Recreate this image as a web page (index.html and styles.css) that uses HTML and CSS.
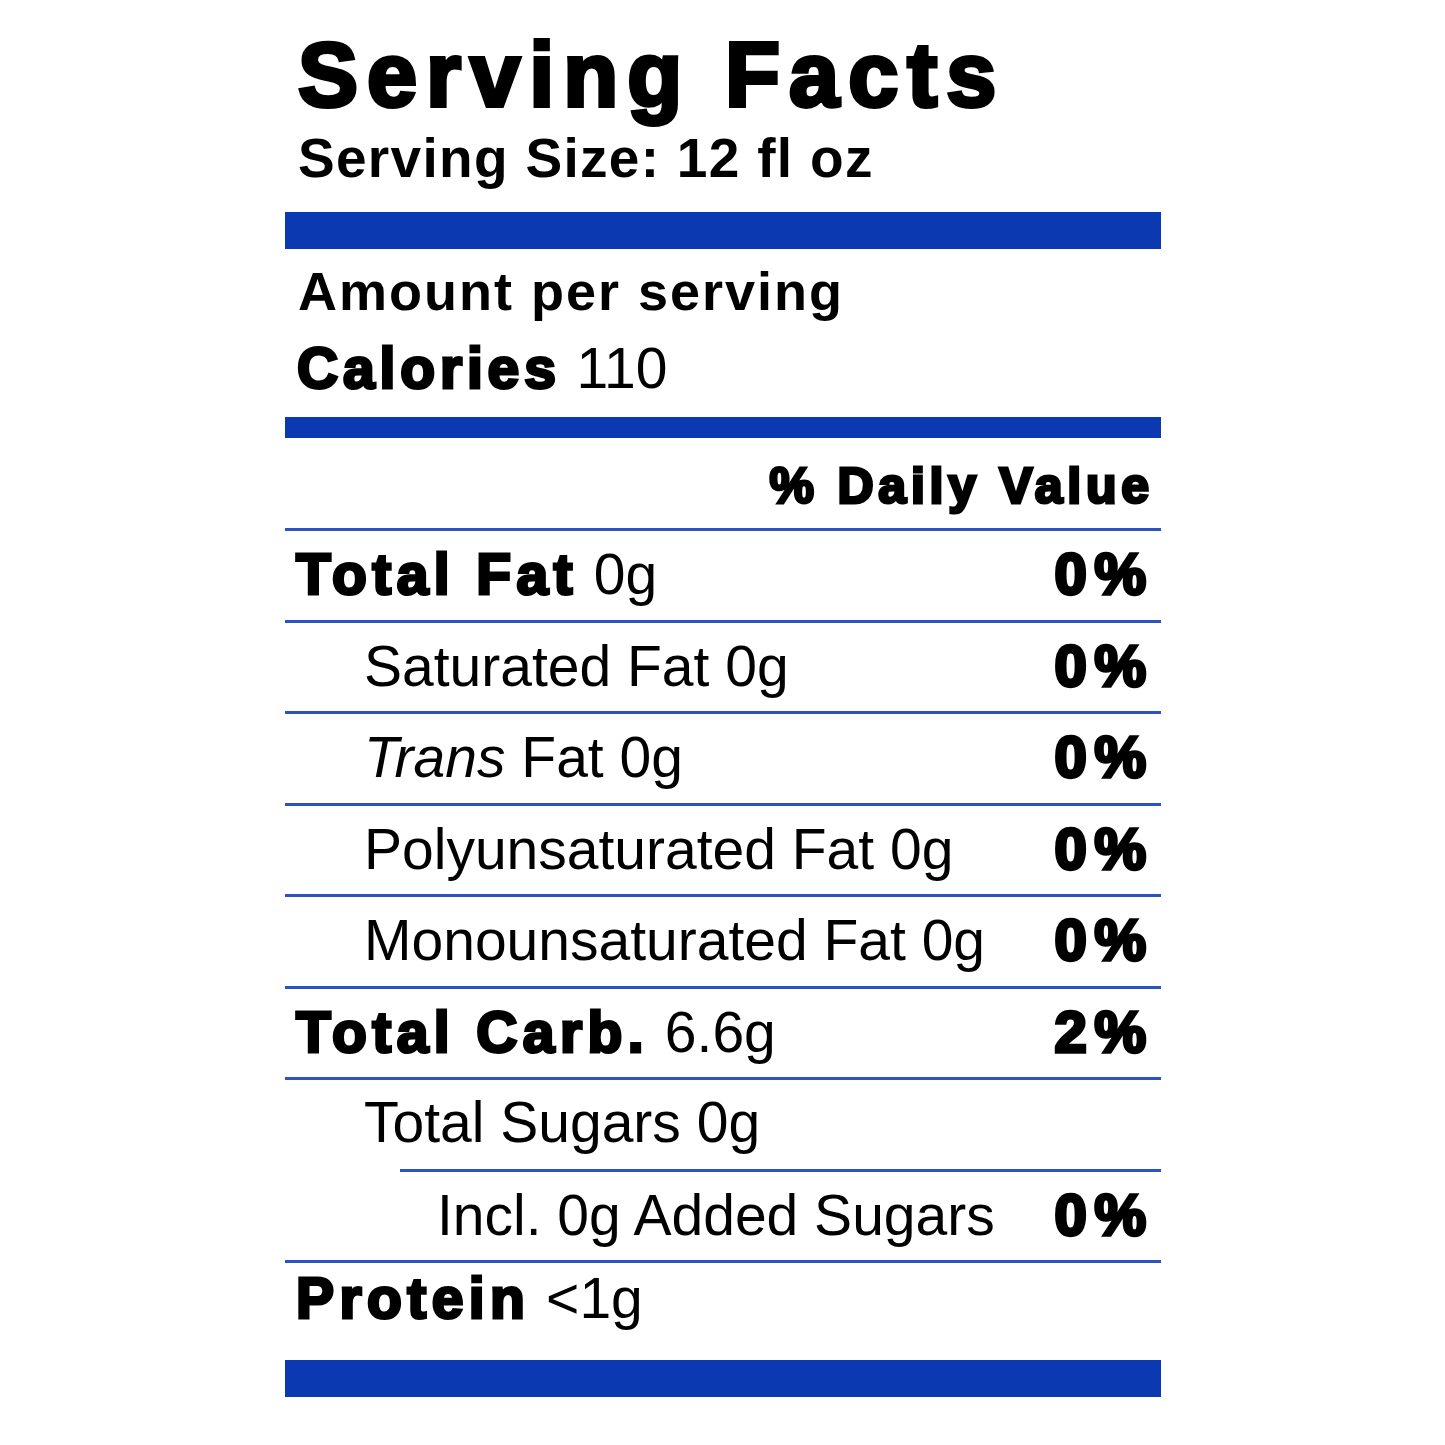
FILE: index.html
```html
<!DOCTYPE html>
<html lang="en">
<head>
<meta charset="utf-8">
<title>Serving Facts</title>
<link rel="stylesheet" href="styles.css">
</head>
<body>
<div class="label">
  <h1 class="title">Serving Facts</h1>
  <div class="size">Serving Size: 12 fl oz</div>
  <div class="bar bar-thick"></div>
  <div class="amount">Amount per serving</div>
  <div class="calories"><b class="heavy">Calories</b> 110</div>
  <div class="bar bar-mid"></div>
  <div class="dv-head"><span class="heavy">% Daily Value</span></div>

  <div class="row"><span class="name"><b class="heavy">Total Fat</b> 0g</span><span class="pct">0%</span></div>
  <div class="row sub"><span class="name">Saturated Fat 0g</span><span class="pct">0%</span></div>
  <div class="row sub"><span class="name"><i>Trans</i> Fat 0g</span><span class="pct">0%</span></div>
  <div class="row sub"><span class="name">Polyunsaturated Fat 0g</span><span class="pct">0%</span></div>
  <div class="row sub"><span class="name">Monounsaturated Fat 0g</span><span class="pct">0%</span></div>
  <div class="row"><span class="name"><b class="heavy">Total Carb.</b> 6.6g</span><span class="pct">2%</span></div>
  <div class="row sub"><span class="name">Total Sugars 0g</span></div>
  <div class="row subsub"><span class="name">Incl. 0g Added Sugars</span><span class="pct">0%</span></div>
  <div class="row protein"><span class="name"><b class="heavy">Protein</b> &lt;1g</span></div>
  <div class="bar bar-thick"></div>
</div>
</body>
</html>
```

FILE: styles.css
```css
html, body {
  margin: 0;
  padding: 0;
  background: #ffffff;
}

body {
  font-family: "Liberation Sans", Arial, sans-serif;
  color: #000;
}

.label {
  width: 876px;
  margin-left: 285px;
  padding-top: 25px;
  padding-bottom: 40px;
}

.title {
  margin: 0;
  padding-left: 13px;
  font-size: 90px;
  line-height: 100px;
  height: 100px;
  font-weight: 700;
  letter-spacing: 0.1em;
  -webkit-text-stroke: 4px #000;
  white-space: nowrap;
}

.size {
  margin-top: 3px;
  padding-left: 13px;
  font-size: 55px;
  line-height: 60px;
  font-weight: 700;
  letter-spacing: 1.3px;
  white-space: nowrap;
}

.bar {
  background: #0a39b1;
}

.bar-thick {
  height: 37px;
}

.size + .bar-thick {
  margin-top: 24px;
}

.bar-mid {
  height: 21px;
  margin-top: 16px;
}

.amount {
  margin-top: 12px;
  padding-left: 13px;
  font-size: 54px;
  line-height: 60px;
  font-weight: 700;
  letter-spacing: 2px;
  white-space: nowrap;
}

.calories {
  margin-top: 14px;
  padding-left: 12px;
  font-size: 57px;
  line-height: 66px;
  white-space: nowrap;
}

.heavy {
  font-weight: 700;
  letter-spacing: 0.095em;
  -webkit-text-stroke: 3px #000;
}

.calories .heavy {
  letter-spacing: 0.085em;
}

.dv-head {
  padding-top: 7px;
  padding-right: 12px;
  height: 83px;
  line-height: 83px;
  font-size: 50px;
  text-align: right;
  white-space: nowrap;
}

.dv-head .heavy {
  margin-right: -0.095em;
}

.row {
  display: flex;
  justify-content: space-between;
  align-items: baseline;
  border-top: 3px solid #2c52c4;
  height: 85.5px;
  padding-bottom: 3px;
  padding-left: 11px;
  padding-right: 15px;
  font-size: 57px;
  line-height: 85.5px;
  white-space: nowrap;
}

.row.sub {
  padding-left: 79px;
}

.row.subsub {
  margin-left: 115px;
  padding-left: 37px;
}

.row.protein {
  height: 70.5px;
  line-height: 70.5px;
  padding-bottom: 26.5px;
}

.name i {
  font-style: italic;
}

.pct {
  font-weight: 700;
  font-size: 58px;
  letter-spacing: 0.13em;
  margin-right: -0.13em;
  -webkit-text-stroke: 3.5px #000;
}
```
